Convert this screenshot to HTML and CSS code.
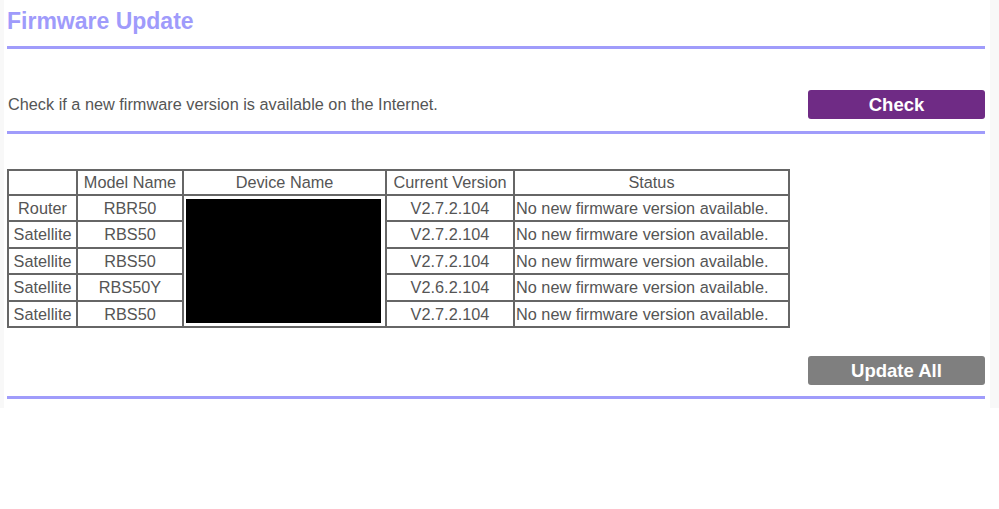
FILE: index.html
```html
<!DOCTYPE html>
<html lang="en">
<head>
    <meta charset="UTF-8">
    <title>Firmware Update</title>
    <link rel="stylesheet" href="styles.css">
</head>
<body>
    <div class="frame">
        <div class="page">
            <h1 class="page-title">Firmware Update</h1>
            <div class="rule"></div>

            <div class="check-row">
                <p class="check-text">Check if a new firmware version is available on the Internet.</p>
                <button class="btn btn-check">Check</button>
            </div>
            <div class="rule"></div>

            <table class="fw-table">
                <colgroup>
                    <col class="c-type">
                    <col class="c-model">
                    <col class="c-device">
                    <col class="c-version">
                    <col class="c-status">
                </colgroup>
                <tr class="head">
                    <th></th>
                    <th>Model Name</th>
                    <th>Device Name</th>
                    <th>Current Version</th>
                    <th>Status</th>
                </tr>
                <tr>
                    <td>Router</td>
                    <td>RBR50</td>
                    <td rowspan="5" class="device-cell"><div class="redacted"></div></td>
                    <td>V2.7.2.104</td>
                    <td class="status">No new firmware version available.</td>
                </tr>
                <tr class="tall">
                    <td>Satellite</td>
                    <td>RBS50</td>
                    <td>V2.7.2.104</td>
                    <td class="status">No new firmware version available.</td>
                </tr>
                <tr>
                    <td>Satellite</td>
                    <td>RBS50</td>
                    <td>V2.7.2.104</td>
                    <td class="status">No new firmware version available.</td>
                </tr>
                <tr class="tall">
                    <td>Satellite</td>
                    <td>RBS50Y</td>
                    <td>V2.6.2.104</td>
                    <td class="status">No new firmware version available.</td>
                </tr>
                <tr>
                    <td>Satellite</td>
                    <td>RBS50</td>
                    <td>V2.7.2.104</td>
                    <td class="status">No new firmware version available.</td>
                </tr>
            </table>

            <div class="update-row">
                <button class="btn btn-update">Update All</button>
            </div>
            <div class="rule"></div>
        </div>
    </div>
</body>
</html>
```

FILE: styles.css
```css
body {
    margin: 0;
    padding: 0;
    background: #fff;
    font-family: "Liberation Sans", Arial, sans-serif;
    color: #555;
}

.frame {
    width: 999px;
    background: #f8f8f8;
    padding: 0 9px 0 4px;
    box-sizing: border-box;
}

.page {
    background: #fff;
    padding: 8px 5px 9px 3px;
}

.page-title {
    margin: 0 0 12px 0;
    font-size: 23px;
    line-height: 26px;
    font-weight: bold;
    color: #9f9bfb;
}

.rule {
    height: 3px;
    background: #a09cfb;
}

.check-row {
    display: flex;
    align-items: center;
    justify-content: space-between;
    margin-top: 41px;
    margin-bottom: 12px;
    padding-left: 1px;
}

.check-text {
    margin: 0;
    font-size: 16.3px;
}

.btn {
    width: 177px;
    height: 29px;
    border: none;
    border-radius: 3px;
    color: #fff;
    font-family: "Liberation Sans", Arial, sans-serif;
    font-size: 18.5px;
    font-weight: bold;
    cursor: pointer;
}

.btn-check {
    background: #6f2b85;
}

.btn-update {
    background: #7f7f7f;
}

.fw-table {
    margin-top: 35px;
    border-collapse: collapse;
    table-layout: fixed;
    width: 781px;
    font-size: 16.3px;
    color: #555;
}

.c-type { width: 69px; }
.c-model { width: 106px; }
.c-device { width: 203px; }
.c-version { width: 128px; }
.c-status { width: 275px; }

.fw-table tr {
    height: 26px;
}

.fw-table tr.head {
    height: 25px;
}

.fw-table tr.tall {
    height: 27px;
}

.fw-table th,
.fw-table td {
    border: 2px solid #666;
    padding: 0 2px;
    text-align: center;
    font-weight: normal;
    white-space: nowrap;
}

.fw-table td.status {
    text-align: left;
    padding-left: 1px;
}

.fw-table td.device-cell {
    padding: 2px 4px 2px 2px;
    vertical-align: middle;
}

.redacted {
    height: 124px;
    background: #000;
}

.update-row {
    display: flex;
    justify-content: flex-end;
    margin-top: 28px;
    margin-bottom: 11px;
}
```
